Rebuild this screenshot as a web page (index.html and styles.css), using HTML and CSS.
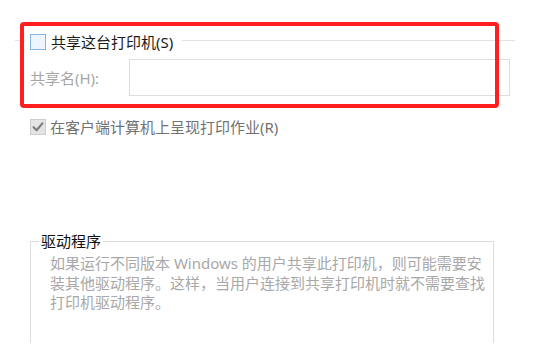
FILE: index.html
```html
<!DOCTYPE html>
<html lang="zh-CN">
<head>
<meta charset="utf-8">
<title>共享</title>
<link rel="stylesheet" href="styles.css">
</head>
<body>
<div class="page">
  <div class="share-head">
    <span class="rule rule-short"></span>
    <span class="check check-empty"></span>
    <span class="share-label">共享这台打印机(S)</span>
    <span class="rule rule-long"></span>
  </div>
  <div class="name-row">
    <span class="name-label">共享名(H):</span>
    <span class="name-input"></span>
  </div>
  <div class="render-row">
    <span class="check check-on">
      <svg width="14" height="14" viewBox="0 0 14 14"><path d="M2.6 7.2 L5.6 10.2 L11.4 3.4" fill="none" stroke="#7d7d7d" stroke-width="2.2" stroke-linecap="round" stroke-linejoin="round"/></svg>
    </span>
    <span class="render-label">在客户端计算机上呈现打印作业(R)</span>
  </div>
  <fieldset class="driver">
    <legend class="driver-title">驱动程序</legend>
    <p class="driver-text">如果运行不同版本 Windows 的用户共享此打印机，则可能需要安<br>装其他驱动程序。这样，当用户连接到共享打印机时就不需要查找<br>打印机驱动程序。</p>
  </fieldset>
  <div class="annot"></div>
</div>
</body>
</html>
```

FILE: styles.css
```css
html, body {
  margin: 0;
  padding: 0;
  background: #ffffff;
}
body {
  font-family: "Noto Sans", "Noto Sans CJK SC", sans-serif;
  font-size: 15px;
  width: 534px;
  height: 355px;
  overflow: hidden;
}
.page {
  position: relative;
  padding-top: 34px;
}
.share-head {
  display: flex;
  align-items: flex-start;
  margin-left: 15px;
  width: 500px;
  height: 16px;
}
.rule {
  height: 1px;
  background: #e3e3e3;
  margin-top: 6px;
}
.rule-short {
  width: 10px;
  margin-right: 5px;
}
.rule-long {
  flex: 1;
  margin-left: 9px;
}
.check {
  box-sizing: border-box;
  width: 16px;
  height: 16px;
  flex: none;
  display: flex;
  align-items: center;
  justify-content: center;
}
.check-empty {
  border: 1.5px solid #86b4e4;
  background: #eef5fd;
}
.check-on {
  border: 1px solid #cdcdcd;
  background: #e4e4e4;
}
.share-label {
  margin-left: 5px;
  line-height: 16px;
  color: #1a1a1a;
  white-space: nowrap;
}
.name-row {
  display: flex;
  align-items: center;
  margin-top: 9px;
  margin-left: 30px;
}
.name-label {
  width: 99px;
  color: #a6a6a6;
  line-height: 20px;
}
.name-input {
  box-sizing: border-box;
  width: 381px;
  height: 37px;
  border: 1px solid #dedede;
  background: #fff;
}
.render-row {
  display: flex;
  align-items: center;
  margin-top: 23px;
  margin-left: 30px;
  height: 16px;
}
.render-label {
  margin-left: 4px;
  color: #727272;
  line-height: 16px;
  white-space: nowrap;
}
.driver {
  box-sizing: border-box;
  margin: 96px 0 0 30px;
  width: 464px;
  height: 112px;
  padding: 0 0 0 8px;
  border: 1px solid #dcdcdc;
  border-bottom: none;
}
.driver-title {
  padding: 0 2px;
  line-height: 20px;
  color: #111111;
}
.driver-text {
  margin: 3px 0 0 11px;
  line-height: 19.5px;
  color: #a8a8a8;
  white-space: nowrap;
}
.annot {
  position: absolute;
  left: 20px;
  top: 22px;
  box-sizing: border-box;
  width: 479px;
  height: 86px;
  border: 4px solid #ff1f1f;
  border-radius: 4px;
}
```
